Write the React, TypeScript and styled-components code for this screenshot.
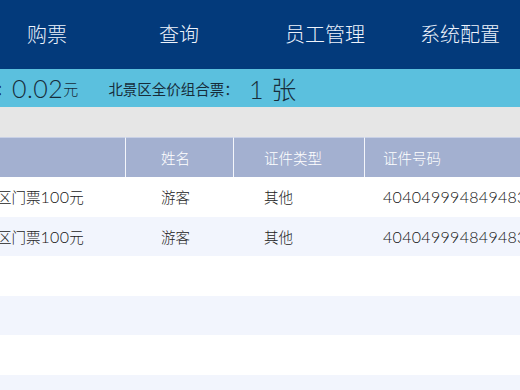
import * as React from 'react';
import styled, { createGlobalStyle } from 'styled-components';

const GlobalStyle = createGlobalStyle`
  html, body {
    margin: 0;
    padding: 0;
    background: #fff;
    overflow: hidden;
  }
  body {
    font-family: "Noto Sans CJK SC", "Noto Sans", sans-serif;
  }
`;

const Page = styled.div`
  width: 520px;
  height: 390px;
  overflow: hidden;
  display: flex;
  flex-direction: column;
  & > * {
    flex-shrink: 0;
  }
`;

const NavBar = styled.div`
  height: 69px;
  background: #033a7b;
  display: grid;
  grid-template-columns: 94px 170px 122px 148px;
  align-items: center;
`;

const NavItem = styled.div`
  color: #eef3fb;
  font-size: 20px;
  font-weight: 300;
  text-align: center;
  line-height: 1;
  margin-top: -2px;
`;

const InfoBar = styled.div`
  height: 38px;
  background: #5bc0de;
  display: flex;
  align-items: center;
  color: #172c3a;
  white-space: nowrap;
`;

const Colon = styled.span`
  font-size: 15px;
  margin-left: -4px;
`;

const BigNum = styled.span<{ gap?: number }>`
  font-family: "Lato", "Noto Sans CJK SC", sans-serif;
  font-weight: 300;
  font-size: 25px;
  letter-spacing: 0.5px;
  margin-left: ${p => p.gap ?? 1}px;
`;

const Unit = styled.span`
  font-size: 15px;
  font-weight: 300;
`;

const InfoLabel = styled.span`
  font-size: 14.5px;
  margin-left: 30px;
`;

const GrayBar = styled.div`
  height: 30px;
  background: #e6e6e6;
`;

const Table = styled.div`
  display: grid;
  grid-template-columns: 126px 108px 131px 1fr;
`;

const HeadCell = styled.div<{ pad: number; last?: boolean }>`
  height: 40px;
  background: #a3b0d0;
  border-top: 1px solid #c9d1e6;
  box-sizing: border-box;
  border-right: ${p => (p.last ? 'none' : '1px solid #f4f6fb')};
  color: #fff;
  font-size: 14.5px;
  font-weight: 300;
  display: flex;
  align-items: center;
  padding-left: ${p => p.pad}px;
`;

const Cell = styled.div<{ pad: number; alt: boolean }>`
  height: 39.5px;
  background: ${p => (p.alt ? '#f2f5fd' : '#ffffff')};
  color: #222;
  font-size: 14.5px;
  font-weight: 300;
  display: flex;
  align-items: center;
  padding-left: ${p => p.pad}px;
  white-space: nowrap;
  overflow: hidden;
`;

const Num = styled.span`
  font-family: "Lato", sans-serif;
  font-weight: 300;
  font-size: 16px;
  letter-spacing: 0.3px;
  color: #111;
`;

const Cut = styled.span`
  margin-left: -3px;
`;

const pads = [0, 35, 30, 18];

type Row = React.ReactNode[];

const ticket = (
  <Cut>
    区门票<Num>100</Num>元
  </Cut>
);

const rows: Row[] = [
  [ticket, '游客', '其他', <Num>404049994849483</Num>],
  [ticket, '游客', '其他', <Num>404049994849483</Num>],
  ['', '', '', ''],
  ['', '', '', ''],
  ['', '', '', ''],
  ['', '', '', ''],
];

export default function App() {
  return (
    <Page>
      <GlobalStyle />
      <NavBar>
        <NavItem>购票</NavItem>
        <NavItem>查询</NavItem>
        <NavItem>员工管理</NavItem>
        <NavItem>系统配置</NavItem>
      </NavBar>
      <InfoBar>
        <Colon>：</Colon>
        <BigNum>0.02</BigNum>
        <Unit>元</Unit>
        <InfoLabel>北景区全价组合票：</InfoLabel>
        <BigNum gap={10}>1 张</BigNum>
      </InfoBar>
      <GrayBar />
      <Table>
        <HeadCell pad={0} />
        <HeadCell pad={35}>姓名</HeadCell>
        <HeadCell pad={30}>证件类型</HeadCell>
        <HeadCell pad={18} last>证件号码</HeadCell>
        {rows.map((row, i) =>
          row.map((content, j) => (
            <Cell key={`${i}-${j}`} pad={pads[j]} alt={i % 2 === 1}>
              {content}
            </Cell>
          ))
        )}
      </Table>
    </Page>
  );
}
